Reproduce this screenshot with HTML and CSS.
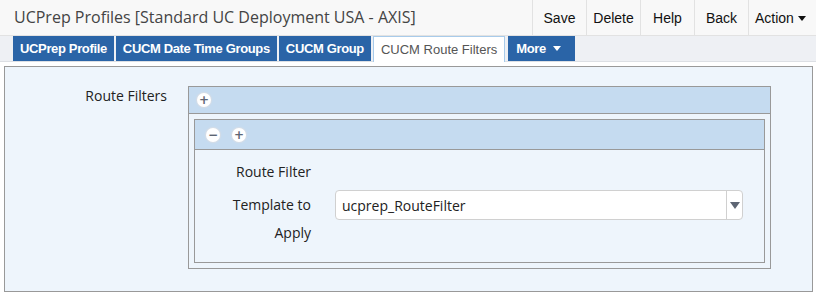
FILE: index.html
```html
<!DOCTYPE html>
<html lang="en">
<head>
    <meta charset="UTF-8">
    <meta name="viewport" content="width=device-width, initial-scale=1.0">
    <title>UCPrep Profiles</title>
    <link rel="stylesheet" href="styles.css">
</head>
<body>
    <header class="topbar">
        <h1 class="page-title">UCPrep Profiles [Standard UC Deployment USA - AXIS]</h1>
        <nav class="actions">
            <button class="action-btn">Save</button>
            <button class="action-btn">Delete</button>
            <button class="action-btn">Help</button>
            <button class="action-btn">Back</button>
            <button class="action-btn action-menu">Action <span class="caret"></span></button>
        </nav>
    </header>

    <ul class="tabs">
        <li class="tab">UCPrep Profile</li>
        <li class="tab">CUCM Date Time Groups</li>
        <li class="tab">CUCM Group</li>
        <li class="tab active">CUCM Route Filters</li>
        <li class="tab more">More <span class="caret white"></span></li>
    </ul>

    <section class="panel">
        <div class="field-row">
            <label class="field-label">Route Filters</label>
            <div class="list-box">
                <div class="list-head">
                    <span class="circle-btn">+</span>
                </div>
                <div class="item-box">
                    <div class="item-head">
                        <span class="circle-btn">&minus;</span>
                        <span class="circle-btn">+</span>
                    </div>
                    <div class="item-body">
                        <div class="item-row">
                            <span class="item-label">Route Filter</span>
                        </div>
                        <div class="item-row">
                            <label class="item-label" for="template">Template to Apply</label>
                            <div class="select-wrap">
                                <select id="template" class="select">
                                    <option>ucprep_RouteFilter</option>
                                </select>
                                <span class="select-arrow"></span>
                            </div>
                        </div>
                    </div>
                </div>
            </div>
        </div>
    </section>
</body>
</html>
```

FILE: styles.css
```css
* {
    box-sizing: border-box;
}

body, h1, ul, button, select {
    margin: 0;
    padding: 0;
}

body {
    font-family: 'Open Sans', sans-serif;
    background-color: #fff;
    color: #222;
}

/* top bar */
.topbar {
    display: flex;
    justify-content: space-between;
    height: 36px;
    background-color: #f8f8f8;
    border-bottom: 1px solid #e2e2e2;
}

.page-title {
    font-size: 16px;
    font-weight: normal;
    color: #444;
    line-height: 34px;
    padding-left: 14px;
}

.actions {
    display: flex;
}

.action-btn {
    width: 54px;
    height: 35px;
    font-family: 'Liberation Sans', Arial, sans-serif;
    font-size: 14px;
    color: #111;
    background: none;
    border: none;
    border-left: 1px solid #e2e2e2;
}

.action-btn.action-menu {
    width: 68px;
    text-align: left;
    padding-left: 6px;
}

.caret {
    display: inline-block;
    width: 0;
    height: 0;
    border-left: 4px solid transparent;
    border-right: 4px solid transparent;
    border-top: 5px solid #111;
    vertical-align: 2px;
}

.caret.white {
    border-top-color: #fff;
    margin-left: 4px;
}

/* tabs */
.tabs {
    list-style: none;
    display: flex;
    gap: 2px;
    height: 26px;
    padding-left: 13px;
    background-color: #eef0f4;
    border-bottom: 1px solid #dcdfe4;
}

.tab {
    height: 25px;
    line-height: 25px;
    padding: 0 7px;
    font-family: 'Liberation Sans', Arial, sans-serif;
    font-size: 13px;
    font-weight: bold;
    letter-spacing: -0.35px;
    color: #fff;
    background-color: #2a64a7;
}

.tab.active {
    background-color: #fff;
    color: #555;
    font-weight: normal;
    letter-spacing: 0;
    height: 26px;
    border: 1px solid #a8cbea;
    border-bottom: none;
    line-height: 25px;
    padding: 0 7px;
}

.tab.more {
    margin-left: 1px;
    padding: 0 14px 0 8px;
}

/* panel */
.panel {
    margin: 4px 3px 0 4px;
    height: 226px;
    background-color: #eef5fc;
    border: 1px solid #999;
    padding: 19px 41px 0 0;
}

.field-row {
    display: flex;
    gap: 21px;
}

.field-label {
    width: 162px;
    text-align: right;
    font-size: 14px;
    line-height: 20px;
}

.list-box {
    flex: 1;
    height: 183px;
    border: 1px solid #999;
}

.list-head {
    height: 27px;
    display: flex;
    align-items: center;
    padding-left: 8px;
    background-color: #c5dbf0;
    border-bottom: 1px solid #999;
}

.item-box {
    margin: 5px;
    height: 144px;
    border: 1px solid #999;
}

.item-head {
    height: 30px;
    display: flex;
    align-items: center;
    gap: 12px;
    padding-left: 11px;
    background-color: #c5dbf0;
    border-bottom: 1px solid #999;
}

.circle-btn {
    width: 14px;
    height: 14px;
    border-radius: 50%;
    background-color: #fff;
    box-shadow: 0 0 1px 1px #d6dde6;
    color: #5d6573;
    font-family: 'DejaVu Sans', sans-serif;
    font-size: 12px;
    font-weight: bold;
    line-height: 14px;
    text-align: center;
}

.item-body {
    padding: 8px 21px 0 0;
}

.item-row {
    display: flex;
    gap: 24px;
    margin-bottom: 5px;
}

.item-label {
    width: 116px;
    flex-shrink: 0;
    text-align: right;
    font-size: 14px;
    line-height: 28px;
}

.select-wrap {
    position: relative;
    flex: 1;
    margin-top: -1px;
}

.select {
    width: 100%;
    height: 30px;
    appearance: none;
    background-color: #fff;
    border: 1px solid #d0d0d0;
    border-radius: 4px;
    font-family: 'Open Sans', sans-serif;
    font-size: 14px;
    color: #222;
    padding-left: 6px;
    outline: none;
}

.select-arrow {
    position: absolute;
    top: 1px;
    right: 1px;
    width: 16px;
    height: 28px;
    border-left: 1px solid #d0d0d0;
}

.select-arrow::after {
    content: "";
    position: absolute;
    left: 3px;
    top: 11px;
    border-left: 5px solid transparent;
    border-right: 5px solid transparent;
    border-top: 7px solid #5d6573;
}
```
